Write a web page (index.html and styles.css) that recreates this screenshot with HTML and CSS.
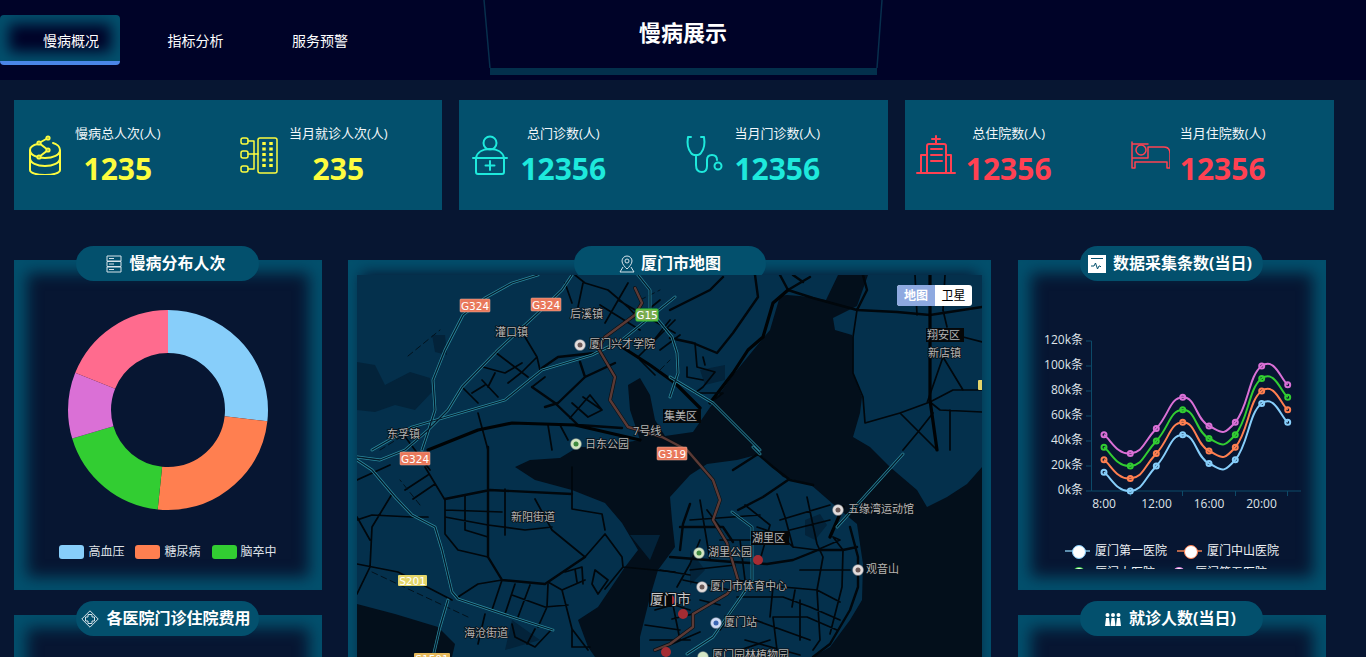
FILE: index.html
```html
<!DOCTYPE html>
<html lang="zh">
<head>
<meta charset="utf-8">
<title>慢病展示</title>
<link rel="stylesheet" href="styles.css">
</head>
<body>
<header class="header">
  <nav class="tabs">
    <a class="tab active">慢病概况</a>
    <a class="tab">指标分析</a>
    <a class="tab">服务预警</a>
  </nav>
  <div class="brand">
    <svg class="brand-frame" viewBox="0 0 400 80" aria-hidden="true">
      <path class="brand-line" d="M1,0 7,68 M399,0 394,68"/>
      <rect class="brand-bar" x="7" y="68" width="387" height="7"/>
    </svg>
    <h1 class="brand-title">慢病展示</h1>
  </div>
</header>

<section class="stats">
  <div class="card yellow">
    <div class="stat">
      <svg class="stat-icon" viewBox="0 0 40 40"><path d="M5 15c0-3 3-5 8-6M28 8c4 1 7 4 7 7 0 5-7 8-15 8S5 20 5 15v20c0 3 7 5 15 5s15-2 15-5V15M5 23c0 5 7 8 15 8s15-3 15-8"/><path d="M23 3 14 8l9 7-9 7"/><circle class="dot" cx="23" cy="3" r="1.600"/><circle class="dot" cx="14" cy="8" r="1.600"/><circle class="dot" cx="23" cy="15" r="1.600"/><circle class="dot" cx="14" cy="22" r="1.600"/></svg>
      <div class="stat-text"><div class="stat-label">慢病总人次(人)</div><div class="stat-num">1235</div></div>
    </div>
    <div class="stat">
      <svg class="stat-icon thin" viewBox="0 0 40 40"><rect x="2" y="3" width="7" height="6" rx="2"/><rect x="2" y="16" width="7" height="7" rx="2"/><rect x="2" y="31" width="7" height="6" rx="2"/><rect x="19" y="3" width="19" height="35" rx="2"/><path d="M9 6h6v28H9M9 19h10"/><path class="dash" d="M25 7v26M32 7v26"/></svg>
      <div class="stat-text"><div class="stat-label">当月就诊人次(人)</div><div class="stat-num">235</div></div>
    </div>
  </div>
  <div class="card cyan">
    <div class="stat">
      <svg class="stat-icon" viewBox="0 0 40 40"><circle cx="20" cy="8" r="6.500"/><path d="M6 23c1-6 7-9 14-9s13 3 14 9M3 23h34M6 23v14a2 2 0 0 0 2 2h24a2 2 0 0 0 2-2V23M20 26v9M15.500 30.500h9"/></svg>
      <div class="stat-text"><div class="stat-label">总门诊数(人)</div><div class="stat-num">12356</div></div>
    </div>
    <div class="stat">
      <svg class="stat-icon" viewBox="0 0 40 40"><path d="M7 2H4C3 8 3 13 7 18c2 3 8 3 10 0 4-5 4-10 3-16h-3M12 20v10c0 4 2 7 6 7s5-3 5-6v-6c0-3 2-5 5-5s5 2 5 5v0"/><circle cx="34" cy="31" r="3.500"/></svg>
      <div class="stat-text"><div class="stat-label">当月门诊数(人)</div><div class="stat-num">12356</div></div>
    </div>
  </div>
  <div class="card red">
    <div class="stat">
      <svg class="stat-icon" viewBox="0 0 40 40"><path d="M20 1v8M16 4h8M11 38V11a2 2 0 0 1 2-2h15a2 2 0 0 1 2 2v27M15 14h11M15 20h11M15 26h11M11 20H5v18M30 20h5v18M1 38h38M14 38h12"/></svg>
      <div class="stat-text"><div class="stat-label">总住院数(人)</div><div class="stat-num">12356</div></div>
    </div>
    <div class="stat">
      <svg class="stat-icon thin" viewBox="0 0 40 40"><path d="M2 7v26h3v-6h32v6h3V19c0-4-2-7-6-7H18v11H2M2 9h16M6 23h12"/><circle cx="11" cy="15" r="5"/></svg>
      <div class="stat-text"><div class="stat-label">当月住院数(人)</div><div class="stat-num">12356</div></div>
    </div>
  </div>
</section>

<main class="board">
  <div class="col side">
    <section class="panel">
      <h2 class="pill"><svg class="pill-icon" viewBox="0 0 16 18"><path d="M1 1h14v5H1zM1 6.500h14v5H1zM1 12h14v5H1zM3 3.500h5M3 9h5M3 14.500h5"/></svg>慢病分布人次</h2>
      <svg class="donut" viewBox="0 0 200 200">
        <g transform="rotate(-90 100 100)">
          <circle class="seg c-blue" cx="100" cy="100" r="78.500" pathLength="360" stroke-dasharray="96.500 360"/>
          <circle class="seg c-orange" cx="100" cy="100" r="78.500" pathLength="360" stroke-dasharray="89.500 360" stroke-dashoffset="-96.500"/>
          <circle class="seg c-green" cx="100" cy="100" r="78.500" pathLength="360" stroke-dasharray="67.300 360" stroke-dashoffset="-186"/>
          <circle class="seg c-purple" cx="100" cy="100" r="78.500" pathLength="360" stroke-dasharray="38.600 360" stroke-dashoffset="-253.300"/>
          <circle class="seg c-pink" cx="100" cy="100" r="78.500" pathLength="360" stroke-dasharray="68.100 360" stroke-dashoffset="-291.900"/>
        </g>
      </svg>
      <ul class="pie-legend">
        <li><i class="sw bg-blue"></i>高血压</li>
        <li><i class="sw bg-orange"></i>糖尿病</li>
        <li><i class="sw bg-green"></i>脑卒中</li>
      </ul>
    </section>
    <section class="panel">
      <h2 class="pill"><svg class="pill-icon wide" viewBox="0 0 18 18"><path d="M9 .8 17.200 9 9 17.200.8 9z"/><path d="M7 4.500h4v2.500h2.500v4H11v2.500H7V11H4.500V7H7z"/></svg>各医院门诊住院费用</h2>
    </section>
  </div>

  <section class="panel center">
    <h2 class="pill"><svg class="pill-icon" viewBox="0 0 16 18"><path d="M8 1a5 5 0 0 0-5 5c0 3 3 6 5 8 2-2 5-5 5-8a5 5 0 0 0-5-5zM4 12l-3 5h14l-3-5"/><circle cx="8" cy="6" r="2"/></svg>厦门市地图</h2>
    <div class="map">
      <svg class="map-svg" viewBox="357 275 625 382" aria-label="厦门市地图">
        <defs>
          <path id="hw-path" d="M538,275 512,283 485,298 463,315 445,350 433,380 435,410 428,432 422,450M572,275 562,290 538,313 498,350 462,387 448,410 428,430 405,450 380,460 357,457M372,450 412,427 505,400 542,370 592,355 622,340 675,297M357,460 372,470 395,497 412,515 435,527 442,550 452,592 458,599 512,617 553,630M448,600 440,627 433,657M638,275 650,290 650,310 672,337 677,353 678,373 670,397M670,377 713,403 760,450M753,447 760,454M732,512 752,527 752,580 743,594 713,637 687,654M837,527 903,454"/>
        </defs>
        <rect class="land" x="357" y="275" width="625" height="382"/>
        <path class="sea" d="M838,275 826,300 800,296 787,295 780,296 770,330 755,348 733,375 713,403 693,432 665,436 655,420 650,395 640,378 628,385 630,410 640,440 600,447 578,447 560,458 530,460 515,467 535,480 572,490 605,503 622,523 638,550 625,567 598,607 578,620 588,647 595,657 640,657 640,637 650,597 658,570 675,547 672,520 670,497 690,475 707,464 737,460 760,454 783,477 810,484 833,504 857,524 863,564 862,600 850,620 830,647 813,657 982,657 982,467 967,484 947,497 927,507 917,490 890,467 870,447 853,437 860,413 862,397 853,373 852,335 835,330 833,318 857,306 868,275Z"/>
        <path class="sea" d="M357,604 395,614 438,627 455,644 452,657 357,657Z"/>
        <path class="lake" d="M357,362 375,365 385,385 410,372 430,378 432,392 415,410 395,405 375,412 357,410Z M432,335 445,335 447,355 435,352Z M805,520 820,514 827,525 815,540 805,535Z M512,620 540,640 505,650Z M700,370 725,365 725,380 705,385Z M630,535 660,535 650,560Z M690,550 705,570 690,585Z"/>

        <g class="roads">
          <path class="r" d="M565,283 572,303M583,283 578,307M575,275 585,283 608,290 628,307 638,318M605,323 628,283M618,300 675,333M675,320 638,357M495,352 528,377M525,337 537,357 540,370M537,357 522,372 508,383M462,387 478,403M483,367 505,373 522,363M482,380 498,397M495,373 488,387M472,393 485,385M572,403 588,417M583,397 602,410M570,418 590,395 602,410 588,417M478,413 488,450M548,425 552,450M560,425 568,440M545,377 532,387M638,318 660,300M650,345 670,320M640,360 655,375M600,305 640,330M660,350 680,335"/>
          <path class="r2" d="M542,368 558,357 595,353M580,362 585,377 558,403 545,407M532,387 555,403 578,425 622,428M585,377 615,363"/>
          <path class="r3" d="M622,347 650,365 675,383 700,408M428,450 478,430 512,423 575,425 640,440"/>
          <path class="r" d="M445,510 502,512M445,517 488,525 525,530 552,527M465,495 465,530 488,537M505,489 505,535M445,500 445,534 458,550 488,557M425,467 445,500M405,490 428,475M413,499 435,484M535,499 552,530 585,557 605,534 622,557 623,567 605,589M572,467 572,509 602,514 605,530M458,597 478,584 502,580 492,610M515,584 505,614M530,585 518,617M548,584 547,607 538,627M512,595 545,607 568,605M548,582 562,590 572,629 588,650M565,572 582,567 583,584M575,569 577,582M585,580 562,590M595,570 608,580 598,594 592,584 595,570M623,567 675,572M357,520 372,515 412,517 428,517M392,494 372,527 370,567 357,594M357,564 398,572 452,600M512,624 515,637 535,647 552,629M535,629 527,644M572,629 572,647 590,647M478,644 485,614M357,517 370,540"/>
          <path class="r2" d="M488,447 488,490 488,557 502,580 545,584 585,557M445,499 465,495 490,490 572,494"/>
          <path class="r2" d="M755,275 758,297 733,333 717,353 693,343 670,338M723,277 710,290 670,310M780,275 788,290 813,298 857,310 897,312 930,315 982,307M788,290 810,277M793,275 803,282M857,310 867,290 863,275"/>
          <path class="r3" d="M788,290 773,303 763,337 748,350 733,373 710,403"/>
          <path class="r" d="M857,310 853,337 853,373 863,397 865,423 900,413 930,402 953,390 982,390M943,310 947,327M943,357 927,403M943,357 963,390M963,337 982,342M900,413 917,430 937,450M930,402 940,410 982,412M950,410 950,450M918,432 903,450M918,432 933,413M695,343 697,367 715,372 703,387 695,393M687,367 687,377 703,380M703,357 705,365M695,393 723,393 710,403"/>
          <path class="r3" d="M930,275 930,400 937,450"/>
          <path class="r" d="M943,310 945,275M915,275 917,315"/>
          <path class="r2" d="M733,470 758,454 773,467 790,480 813,485M738,510 763,497 788,480M690,504 683,524 680,550M680,527 723,527 733,542M850,527 858,557 858,587 850,610 830,644 813,657M767,564 793,560 818,550 843,550 857,547M670,557 733,562 767,564"/>
          <path class="r" d="M707,510 720,527M777,494 785,517 793,547 817,550 840,540 833,537M807,497 817,544 823,557 817,590 820,640 813,650M833,537 843,550 842,587 830,634M737,580 783,587 817,590 840,602M737,597 783,597 810,607 840,620M773,587 770,617M795,590 792,607M773,617 777,650M773,617 807,617 837,630M743,594 720,630M677,587 690,564 700,540M683,580 730,590M672,644 700,632M740,650 770,640M700,600 720,605M672,619 693,614M757,527 780,535 793,547M745,505 770,525 760,560M650,597 690,610M645,625 680,630M690,520 760,515M700,500 710,560M720,540 770,540M740,540 745,580M690,570 735,565M780,520 830,505M790,530 830,520M800,570 850,570M800,600 800,640M755,620 810,640M745,640 800,655M655,610 690,600M650,640 690,640M660,570 690,575M672,600 680,640M357,480 390,465M400,430 430,470"/>
          <path class="r3" d="M843,507 830,537"/>
          <path class="dash-road" d="M372,572 468,617M420,505 400,480M408,356 440,330M380,450 420,425M640,300 660,290M660,370 670,360"/>
        </g>

        <use href="#hw-path" class="hw-o"/>
        <use href="#hw-path" class="hw-i"/>

        <path class="metro-o" d="M635,288 642,303 635,315 605,337 598,348 615,377 610,400 628,427 662,437 687,450 713,480 720,500 713,520 727,543 738,580 727,594 693,614 693,627 670,644 655,650"/>
        <path class="metro" d="M635,288 642,303 635,315 605,337 598,348 615,377 610,400 628,427 662,437 687,450 713,480 720,500 713,520 727,543 738,580 727,594 693,614 693,627 670,644 655,650"/>

        <g class="pins">
          <circle cx="758" cy="560" r="5"/><circle cx="670" cy="600" r="5"/><circle cx="683" cy="614" r="5"/><circle cx="666" cy="652" r="5"/>
        </g>

        <g class="poi">
          <circle cx="580" cy="345" r="5.500"/><circle class="ink" cx="580" cy="345" r="2.500"/>
          <circle class="park" cx="576" cy="444" r="5.500"/><circle class="park-ink" cx="576" cy="444" r="2.500"/>
          <circle class="park" cx="699" cy="553" r="5.500"/><circle class="park-ink" cx="699" cy="553" r="2.500"/>
          <circle cx="838" cy="510" r="5.500"/><circle class="ink" cx="838" cy="510" r="2.500"/>
          <circle cx="858" cy="570" r="5.500"/><circle class="ink" cx="858" cy="570" r="2.500"/>
          <circle cx="702" cy="587" r="5.500"/><circle class="ink" cx="702" cy="587" r="2.500"/>
          <circle class="rail" cx="716" cy="623" r="5.500"/><circle class="rail-ink" cx="716" cy="623" r="2.500"/>
          <circle class="park" cx="703" cy="657" r="5.500"/>
        </g>

        <g class="shields">
          <rect class="s-red" x="460" y="299" width="30" height="13" rx="1"/><text x="475" y="309.500">G324</text>
          <rect class="s-red" x="531" y="298" width="30" height="13" rx="1"/><text x="546" y="308.500">G324</text>
          <rect class="s-red" x="400" y="452" width="30" height="13" rx="1"/><text x="415" y="462.500">G324</text>
          <rect class="s-red" x="657" y="447" width="30" height="13" rx="1"/><text x="672" y="457.500">G319</text>
          <rect class="s-green" x="636" y="309" width="22" height="12" rx="1"/><text x="647" y="319">G15</text>
          <rect class="s-yellow" x="398" y="575" width="29" height="11" rx="1"/><text x="412.500" y="585">S201</text>
          <rect class="s-amber" x="414" y="653" width="36" height="11" rx="1"/><text x="432" y="663">S1501</text>
          <rect class="s-yellow" x="978" y="380" width="10" height="10" rx="1"/>
        </g>

        <g class="tags">
          <rect x="663" y="409" width="38" height="14"/>
          <rect x="926" y="328" width="38" height="14"/>
          <rect x="751" y="531" width="38" height="14"/>
          <rect x="649" y="593" width="23" height="14"/>
        </g>

        <g class="labels">
          <text x="570" y="318">后溪镇</text>
          <text x="495" y="336">灌口镇</text>
          <text x="589" y="348">厦门兴才学院</text>
          <text x="387" y="438">东孚镇</text>
          <text x="585" y="448">日东公园</text>
          <text x="633" y="435">7号线</text>
          <text x="664" y="420">集美区</text>
          <text x="927" y="339">翔安区</text>
          <text x="928" y="357">新店镇</text>
          <text x="511" y="521">新阳街道</text>
          <text x="464" y="637">海沧街道</text>
          <text x="752" y="542">湖里区</text>
          <text x="708" y="556">湖里公园</text>
          <text x="848" y="513">五缘湾运动馆</text>
          <text x="866" y="573">观音山</text>
          <text x="710" y="590">厦门市体育中心</text>
          <text x="724" y="626">厦门站</text>
          <text x="712" y="659">厦门园林植物园</text>
          <text class="big" x="650" y="604">厦门市</text>
        </g>
      </svg>
      <div class="map-switch"><span class="on">地图</span><span>卫星</span></div>
    </div>
  </section>

  <div class="col side">
    <section class="panel">
      <h2 class="pill"><svg class="pill-icon solid" viewBox="0 0 18 18"><rect class="paper" width="18" height="18"/><path class="paper-line" d="M3 3.500h12M3 11h3l1.500-3 2 6 1.500-3h1l1 1"/></svg>数据采集条数(当日)</h2>
      <svg class="line-chart" viewBox="1018 260 308 280">
        <defs>
          <path id="curve" d="M1104,472.250C1110.600,476.900 1117.200,492.560 1130.300,491C1143.400,489.440 1143.200,480.060 1156.300,466C1169.400,451.940 1169.600,435.380 1182.700,434.750C1195.800,434.130 1195.900,457.250 1209,463.500C1222.100,469.750 1222.200,474.750 1235.300,459.750C1248.400,444.750 1248.600,412.880 1261.700,403.500C1274.800,394.130 1281,417.500 1287.700,422.250"/>
          <g id="dots">
            <circle cx="1104" cy="472.250" r="2.500"/><circle cx="1130.300" cy="491" r="2.500"/><circle cx="1156.300" cy="466" r="2.500"/><circle cx="1182.700" cy="434.750" r="2.500"/><circle cx="1209" cy="463.500" r="2.500"/><circle cx="1235.300" cy="459.750" r="2.500"/><circle cx="1261.700" cy="403.500" r="2.500"/><circle cx="1287.700" cy="422.250" r="2.500"/>
          </g>
        </defs>
        <path class="axis" d="M1091.500,341V491H1301M1086,341h5.500M1086,366h5.500M1086,391h5.500M1086,416h5.500M1086,441h5.500M1086,466h5.500M1086,491h5.500M1130.500,491v5M1182.500,491v5M1235.500,491v5M1287.500,491v5"/>
        <g class="ticks-y">
          <text x="1083" y="344">120k条</text><text x="1083" y="369">100k条</text><text x="1083" y="394">80k条</text><text x="1083" y="419">60k条</text><text x="1083" y="444">40k条</text><text x="1083" y="469">20k条</text><text x="1083" y="494">0k条</text>
        </g>
        <g class="ticks-x">
          <text x="1104" y="508">8:00</text><text x="1156.500" y="508">12:00</text><text x="1209" y="508">16:00</text><text x="1261.500" y="508">20:00</text>
        </g>
        <g class="series s-blue"><use href="#curve"/><use href="#dots"/></g>
        <g class="series s-orange" transform="translate(0 -12.500)"><use href="#curve"/><use href="#dots"/></g>
        <g class="series s-green" transform="translate(0 -25)"><use href="#curve"/><use href="#dots"/></g>
        <g class="series s-purple" transform="translate(0 -37.500)"><use href="#curve"/><use href="#dots"/></g>
      </svg>
      <div class="line-legend">
        <div class="ll-item lk-blue"><i class="ll-key"></i>厦门第一医院</div>
        <div class="ll-item lk-orange"><i class="ll-key"></i>厦门中山医院</div>
        <div class="ll-item lk-green"><i class="ll-key"></i>厦门大医院</div>
        <div class="ll-item lk-purple"><i class="ll-key"></i>厦门第五医院</div>
      </div>
    </section>
    <section class="panel">
      <h2 class="pill"><svg class="pill-icon solid" viewBox="0 0 18 14"><g class="people"><circle cx="3.500" cy="3" r="2"/><circle cx="9" cy="3" r="2"/><circle cx="14.500" cy="3" r="2"/><path d="M1 14l1-8h3l1 8zM6.500 14l1-8h3l1 8zM12 14l1-8h3l1 8z"/></g></svg>就诊人数(当日)</h2>
    </section>
  </div>
</main>
</body>
</html>
```
FILE: styles.css
```css
* { box-sizing: border-box; }
html, body { margin: 0; height: 100%; overflow: hidden; }
body {
  background: #071632;
  color: #fff;
  font-family: "Open Sans", "Noto Sans CJK SC", sans-serif;
}

/* header */
.header { display: flex; height: 80px; background: #000328; }
.tabs { display: flex; gap: 4.500px; width: 483px; padding-top: 15px; align-items: flex-start; }
.tab {
  width: 120px;
  height: 50px;
  padding: 0 21px 3px 43px;
  font-size: 14px;
  line-height: 51px;
  white-space: nowrap;
  border-radius: 4px;
}
.tab.active {
  background: #000328;
  box-shadow: inset 0 0 14px 9px #03506d;
  border-bottom: 4px solid #4a86e8;
}
.brand { position: relative; width: 400px; height: 80px; }
.brand-frame { position: absolute; inset: 0; width: 400px; height: 80px; }
.brand-line { fill: none; stroke: #072f4d; stroke-width: 1.500; }
.brand-bar { fill: #03304c; }
.brand-title {
  position: relative;
  margin: 0;
  padding-top: 16px;
  text-align: center;
  font-size: 22px;
  line-height: 32px;
  font-weight: 700;
}

/* stat cards */
.stats { display: flex; gap: 17px; padding: 20px 0 0 14px; }
.card { display: flex; flex: none; width: 428.400px; height: 110px; background: #03506d; }
.card:last-child { width: 429px; }
.stat { display: flex; gap: 10px; width: 214px; padding: 23px 0 0 11px; }
.stat-icon {
  flex: none;
  width: 40px;
  height: 40px;
  margin-top: 12px;
  fill: none;
  stroke: currentColor;
  stroke-width: 2;
  stroke-linecap: round;
  stroke-linejoin: round;
}
.stat-icon.thin { stroke-width: 1.500; }
.stat-icon .dot { fill: #03506d; }
.stat-icon .dash { stroke-width: 3.500; stroke-dasharray: 3 2.500; stroke-linecap: butt; }
.stat-text { text-align: center; }
.stat-label { color: #f2f7fa; font-size: 13px; line-height: 20px; white-space: nowrap; }
.stat-num { margin-top: 6px; font-size: 30px; line-height: 40px; font-weight: 700; }
.yellow .stat-icon, .yellow .stat-num { color: #fdfc3f; }
.cyan .stat-icon, .cyan .stat-num { color: #1ee9dc; }
.red .stat-icon, .red .stat-num { color: #ff4152; }

/* board */
.board { display: flex; align-items: flex-start; margin-top: 50px; padding-left: 14px; }
.col { display: flex; flex-direction: column; gap: 25px; }
.side { flex: none; width: 308px; }
.panel {
  position: relative;
  height: 330px;
  background: #071632;
  box-shadow: inset 0 0 15px 13px #03506d;
}
.pill {
  position: absolute;
  top: -14px;
  left: 62px;
  display: flex;
  align-items: center;
  justify-content: center;
  gap: 7px;
  width: 183px;
  height: 35px;
  margin: 0;
  padding-right: 3px;
  border-radius: 18px;
  background: #03506d;
  font-size: 16px;
  line-height: 35px;
  font-weight: 700;
  white-space: nowrap;
}
.pill-icon { flex: none; width: 16px; height: 18px; fill: none; stroke: #d7e3ea; stroke-width: 1; }
.pill-icon.wide { width: 18px; }
.pill-icon.solid { width: 18px; stroke: none; }
.paper { fill: #fff; }
.paper-line { fill: none; stroke: #03506d; stroke-width: 1; }
.people { fill: #fff; }

/* donut */
.donut { display: block; width: 200px; height: 200px; margin: 0 auto; padding: 0; position: relative; top: 50px; }
.seg { fill: none; stroke-width: 43; }
.c-blue { stroke: #87cefa; }
.c-orange { stroke: #ff7f50; }
.c-green { stroke: #32cd32; }
.c-purple { stroke: #da70d6; }
.c-pink { stroke: #ff6b8e; }
.pie-legend {
  display: flex;
  justify-content: center;
  gap: 11px;
  margin: 85px 0 0;
  padding: 0;
  list-style: none;
  color: #dfe3e8;
  font-size: 12px;
  line-height: 14px;
}
.pie-legend li { display: flex; align-items: center; gap: 4px; }
.sw { display: block; width: 25px; height: 14px; border-radius: 3px; }
.bg-blue { background: #87cefa; }
.bg-orange { background: #ff7f50; }
.bg-green { background: #32cd32; }

/* centre map */
.center { flex: none; width: 643px; height: 685px; margin: 0 27px 0 26px; padding: 15px 9px; }
.center .pill { left: 226px; width: 192px; gap: 6px; padding-right: 0; }
.map { position: relative; z-index: 1; width: 625px; height: 382px; overflow: hidden; }
.map-svg { display: block; width: 625px; height: 382px; }
.land { fill: #04304c; }
.sea { fill: #030f1b; }
.lake { fill: #03233a; }
.r, .r2, .r3, .dash-road, .hw-o, .hw-i, .metro, .metro-o { fill: none; stroke-linejoin: round; stroke-linecap: round; }
.r { stroke: #01070c; stroke-width: 1.700; }
.r2 { stroke: #01070c; stroke-width: 2.400; }
.r3 { stroke: #000305; stroke-width: 3.200; }
.dash-road { stroke: #02121d; stroke-width: 1; stroke-dasharray: 6 4; }
.hw-o { stroke: #2c8b9e; stroke-width: 2.800; }
.hw-i { stroke: #03192a; stroke-width: 1.300; }
.metro-o { stroke: #0b0f12; stroke-width: 3.600; }
.metro { stroke: #5b3a36; stroke-width: 2.400; }
.pins circle { fill: #a52c33; }
.poi circle { fill: #e4dedd; stroke: #5f6d78; stroke-width: .5; }
.poi .ink { fill: #6b5a58; stroke: none; }
.poi .park { fill: #d4e6c4; }
.poi .park-ink { fill: #3f8a3e; stroke: none; }
.poi .rail { fill: #cfdcf6; }
.poi .rail-ink { fill: #3b66b3; stroke: none; }
.shields text {
  fill: #fff;
  font-family: "DejaVu Sans", sans-serif;
  font-size: 10.500px;
  text-anchor: middle;
}
.s-red { fill: #e9785b; stroke: #f3b19f; stroke-width: .5; }
.s-green { fill: #7aab4f; }
.s-yellow { fill: #e3d56a; }
.s-amber { fill: #e5b85a; }
.tags rect { fill: #050708; }
.labels text {
  fill: #b5b5b5;
  stroke: #0a0f14;
  stroke-width: 1.500;
  paint-order: stroke;
  font-size: 11px;
}
.labels .big { font-size: 13.500px; fill: #c8c8c8; }
.map-switch {
  position: absolute;
  top: 10px;
  left: 540px;
  display: flex;
  width: 75px;
  height: 21px;
  border-radius: 3px;
  overflow: hidden;
  background: #fff;
  color: #000;
  font-size: 12px;
  line-height: 21px;
  text-align: center;
}
.map-switch span { flex: 1; }
.map-switch .on { flex: none; width: 38px; background: #8ea9e0; color: #fff; font-weight: 700; }

/* line chart */
.line-chart { display: block; width: 308px; height: 280px; }
.axis { fill: none; stroke: #0d4a68; stroke-width: 1; }
.ticks-y text, .ticks-x text { fill: #dfe3e8; font-size: 12px; }
.ticks-y text { text-anchor: end; }
.ticks-x text { text-anchor: middle; }
.series { fill: none; stroke-width: 2; }
.series circle { fill: #fff; stroke-width: 1; }
.s-blue { stroke: #87cefa; }
.s-orange { stroke: #ff7f50; }
.s-green { stroke: #32cd32; }
.s-purple { stroke: #da70d6; }
.line-legend {
  display: flex;
  flex-wrap: wrap;
  gap: 0 10px;
  width: 230px;
  height: 29px;
  margin-left: 47px;
  overflow: hidden;
  color: #eef1f4;
  font-size: 12px;
  line-height: 22px;
}
.ll-item { display: flex; align-items: center; gap: 5px; height: 22px; white-space: nowrap; }
.ll-key { position: relative; display: block; flex: none; width: 25px; height: 2px; }
.ll-key::after {
  content: "";
  position: absolute;
  top: -5px;
  left: 6.500px;
  width: 12px;
  height: 12px;
  border-radius: 50%;
  background: #fff;
  border: 1.500px solid;
}
.lk-blue .ll-key { background: #5d8eae; color: #87cefa; }
.lk-orange .ll-key { background: #b5654a; color: #ff7f50; }
.lk-green .ll-key { background: #32cd32; color: #32cd32; }
.lk-purple .ll-key { background: #da70d6; color: #da70d6; }
```
